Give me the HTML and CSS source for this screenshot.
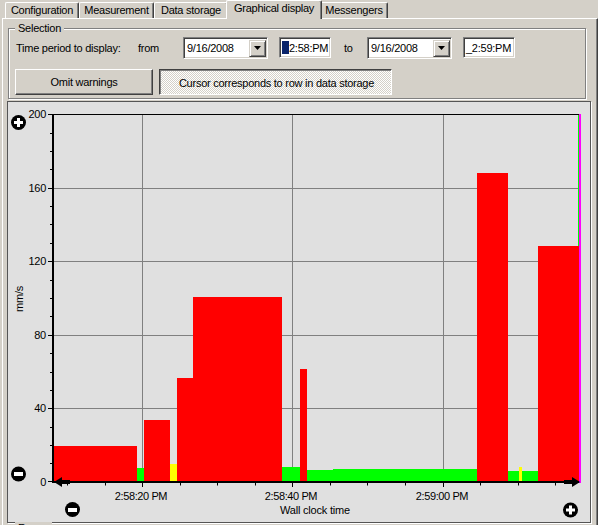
FILE: index.html
```html
<!DOCTYPE html>
<html lang="en">
<head>
    <meta charset="UTF-8">
    <title>Graphical display</title>
    <link rel="stylesheet" href="styles.css">
</head>
<body>
    <div class="app">
        <div class="tabs">
            <div class="tab tab-config">Configuration</div>
            <div class="tab tab-measure">Measurement</div>
            <div class="tab tab-storage">Data storage</div>
            <div class="tab tab-graph active">Graphical display</div>
            <div class="tab tab-msg">Messengers</div>
        </div>
        <div class="page">
            <div class="group selection">
                <div class="group-title">Selection</div>
                <div class="time-row">
                    <span class="lbl lbl-period">Time period to display:</span>
                    <span class="lbl lbl-from">from</span>
                    <div class="combo">
                        <span class="combo-text">9/16/2008</span>
                        <span class="combo-btn"><svg width="7" height="4" viewBox="0 0 7 4"><polygon points="0,0 7,0 3.5,4" fill="#000"/></svg></span>
                    </div>
                    <div class="edit edit-from"><span class="sel"></span>2:58:PM</div>
                    <span class="lbl lbl-to">to</span>
                    <div class="combo">
                        <span class="combo-text">9/16/2008</span>
                        <span class="combo-btn"><svg width="7" height="4" viewBox="0 0 7 4"><polygon points="0,0 7,0 3.5,4" fill="#000"/></svg></span>
                    </div>
                    <div class="edit edit-to">_2:59:PM</div>
                </div>
                <div class="btn-row">
                    <button class="btn btn-omit">Omit warnings</button>
                    <button class="btn btn-cursor pressed">Cursor corresponds to row in data storage</button>
                </div>
            </div>

            <div class="chart-panel">
                <svg class="chart" width="582" height="420" viewBox="8 102 582 420">
                    <!-- grid -->
                    <g stroke="#808080" stroke-width="1">
                        <path d="M142.5 115V481M292.5 115V481M443.5 115V481"/>
                        <path d="M54 188.5H578M54 261.5H578M54 335.5H578M54 408.5H578"/>
                    </g>

                    <!-- bars -->
                    <g>
                        <rect x="54" y="446" width="83" height="35" fill="#ff0000"/>
                        <rect x="137" y="468" width="7" height="13" fill="#00ff00"/>
                        <rect x="144" y="420" width="26" height="61" fill="#ff0000"/>
                        <rect x="170" y="464" width="7" height="17" fill="#ffff00"/>
                        <rect x="177" y="378" width="16" height="103" fill="#ff0000"/>
                        <rect x="193" y="297" width="89" height="184" fill="#ff0000"/>
                        <rect x="282" y="467" width="18" height="14" fill="#00ff00"/>
                        <rect x="300" y="369" width="7" height="112" fill="#ff0000"/>
                        <rect x="307" y="470" width="26" height="11" fill="#00ff00"/>
                        <rect x="333" y="469" width="144" height="12" fill="#00ff00"/>
                        <rect x="477" y="173" width="31" height="308" fill="#ff0000"/>
                        <rect x="508" y="471" width="30" height="10" fill="#00ff00"/>
                        <rect x="519" y="467" width="3" height="14" fill="#ffff00"/>
                        <rect x="538" y="246" width="41" height="235" fill="#ff0000"/>
                        <rect x="578" y="114" width="1" height="132" fill="#00ff00"/>
                        <rect x="579" y="114" width="2" height="369" fill="#ff00ff"/>
                    </g>

                    <!-- axes -->
                    <rect x="52" y="114" width="527" height="1" fill="#000"/>
                    <rect x="52" y="114" width="2" height="369" fill="#000"/>
                    <rect x="52" y="481" width="527" height="2" fill="#000"/>

                    <g stroke="#000" stroke-width="1">
                        <path d="M48 114.5H52M48 188.5H52M48 261.5H52M48 335.5H52M48 408.5H52M48 481.5H52"/>
                        <path d="M50 463.5H52M50 445.5H52M50 427.5H52M50 390.5H52M50 372.5H52M50 353.5H52M50 316.5H52M50 298.5H52M50 280.5H52M50 243.5H52M50 224.5H52M50 206.5H52M50 169.5H52M50 151.5H52M50 133.5H52"/>
                        <path d="M67.5 483V485.5M105.5 483V485.5M180.5 483V485.5M217.5 483V485.5M255.5 483V485.5M330.5 483V485.5M367.5 483V485.5M405.5 483V485.5M480.5 483V485.5M518.5 483V485.5M555.5 483V485.5"/>
                        <path d="M142.5 483V487M292.5 483V487M443.5 483V487"/>
                    </g>

                    <!-- arrows -->
                    <polygon points="54,482 62,477 62,487" fill="#000"/>
                    <rect x="61" y="480" width="9" height="4" fill="#000"/>
                    <polygon points="580,482 572,477 572,487" fill="#000"/>
                    <rect x="564" y="480" width="9" height="4" fill="#000"/>

                    <!-- labels -->
                    <g class="axis-text" text-anchor="end">
                        <text x="46" y="118">200</text>
                        <text x="46" y="192">160</text>
                        <text x="46" y="265">120</text>
                        <text x="46" y="339">80</text>
                        <text x="46" y="412">40</text>
                        <text x="46" y="486">0</text>
                    </g>
                    <g class="axis-text time-text" text-anchor="middle">
                        <text x="141" y="500">2:58:20 PM</text>
                        <text x="291" y="500">2:58:40 PM</text>
                        <text x="442" y="500">2:59:00 PM</text>
                    </g>
                    <text class="axis-text title-text" x="315" y="514" text-anchor="middle">Wall clock time</text>
                    <text class="axis-text" x="0" y="0" text-anchor="middle" transform="translate(23 299) rotate(-90)">mm/s</text>

                    <!-- zoom buttons -->
                    <circle cx="18.5" cy="122.5" r="7.5" fill="#000"/>
                    <rect x="14" y="121" width="9" height="3" fill="#fff"/>
                    <rect x="17" y="118" width="3" height="9" fill="#fff"/>

                    <circle cx="18.5" cy="474" r="7.5" fill="#000"/>
                    <rect x="14" y="472" width="9" height="4" fill="#fff"/>

                    <circle cx="72.5" cy="509.5" r="7.5" fill="#000"/>
                    <rect x="68" y="508" width="9" height="4" fill="#fff"/>

                    <circle cx="570.5" cy="510" r="7.5" fill="#000"/>
                    <rect x="566" y="508.5" width="9" height="3" fill="#fff"/>
                    <rect x="569" y="505.5" width="3" height="9" fill="#fff"/>
                </svg>
            </div>

            <div class="group range">
                <div class="group-title">Range</div>
            </div>
        </div>
    </div>
</body>
</html>
```

FILE: styles.css
```css
body {
    margin: 0;
    background: #d4d0c8;
    font-family: "Liberation Sans", Arial, sans-serif;
    font-size: 11px;
    letter-spacing: -0.25px;
    color: #000;
    height: 525px;
    overflow: hidden;
}
.app {
    width: 598px;
}
.tabs {
    display: flex;
    align-items: flex-end;
    height: 18px;
    padding-left: 5px;
}
.tab {
    box-sizing: border-box;
    height: 16px;
    line-height: 14px;
    text-align: center;
    border-top: 1px solid #fff;
    border-left: 1px solid #fff;
    border-right: 1px solid #404040;
    box-shadow: inset -1px 0 0 #808080;
    border-radius: 2px 2px 0 0;
    white-space: nowrap;
}
.tab-config { width: 74px; }
.tab-measure { width: 75px; }
.tab-storage { width: 74px; }
.tab-graph { width: 92px; }
.tab-msg { width: 68px; }
.tab.active {
    position: relative;
    z-index: 1;
    width: 96px;
    height: 19px;
    margin: 0 -2px -1px;
    line-height: 15px;
    padding-bottom: 3px;
    background: #d4d0c8;
}
.page {
    box-sizing: border-box;
    margin-left: 2px;
    width: 596px;
    height: 520px;
    border-top: 1px solid #fff;
    border-left: 1px solid #fff;
    border-right: 1px solid #404040;
    box-shadow: inset -1px 0 0 #808080;
}

/* group boxes */
.group {
    box-sizing: border-box;
    margin-left: 5px;
    width: 578px;
    border: 1px solid #808080;
    box-shadow: inset 1px 1px 0 #fff, 1px 1px 0 #fff;
}
.selection {
    margin-top: 9px;
    padding: 0 0 3px 0;
}
.group-title {
    width: fit-content;
    height: 13px;
    line-height: 13px;
    margin: -7px 0 0 6px;
    padding: 0 3px;
    background: #d4d0c8;
}
.time-row {
    display: flex;
    align-items: flex-start;
    height: 22px;
    margin-top: 2px;
    padding-left: 7px;
}
.lbl {
    line-height: 22px;
    white-space: nowrap;
}
.lbl-period { width: 122px; }
.lbl-from { width: 45px; }
.lbl-to {
    width: 23px;
    margin-left: 13px;
}
.combo,
.edit {
    box-sizing: border-box;
    display: flex;
    align-items: center;
    background: #fff;
    border: 1px solid;
    border-color: #808080 #fff #fff #808080;
    box-shadow: inset 1px 1px 0 #404040, inset -1px -1px 0 #d4d0c8;
}
.combo {
    width: 85px;
    height: 22px;
    padding: 0 1px 0 3px;
}
.combo-btn {
    box-sizing: border-box;
    display: flex;
    align-items: center;
    justify-content: center;
    margin-left: auto;
    width: 17px;
    height: 17px;
    background: #d4d0c8;
    border: 1px solid;
    border-color: #d4d0c8 #404040 #404040 #d4d0c8;
    box-shadow: inset 1px 1px 0 #fff, inset -1px -1px 0 #808080;
}
.edit {
    width: 52px;
    height: 21px;
    padding-left: 2px;
    margin-left: 11px;
}
.sel {
    display: inline-block;
    width: 7px;
    height: 13px;
    background: #0a246a;
}
.btn-row {
    display: flex;
    gap: 6px;
    margin-top: 10px;
    padding-left: 6px;
}
.btn {
    box-sizing: border-box;
    height: 26px;
    padding: 0;
    font: inherit;
    letter-spacing: inherit;
    color: #000;
    background: #d4d0c8;
    border: 1px solid;
    border-color: #fff #404040 #404040 #fff;
    box-shadow: inset -1px -1px 0 #808080;
}
.btn-omit { width: 138px; }
.btn-cursor { width: 233px; }
.btn.pressed {
    padding: 2px 0 0 2px;
    border-color: #404040 #fff #fff #404040;
    box-shadow: inset 1px 1px 0 #808080;
    background: repeating-conic-gradient(#fff 0 25%, #d4d0c8 0 50%) 0 0 / 2px 2px;
}

/* chart */
.chart-panel {
    box-sizing: border-box;
    margin: 2px 0 0 4px;
    width: 584px;
    height: 422px;
    border: 1px solid #555;
    box-shadow: 1px 1px 0 #fff;
    background: #e0e0e0;
}
.chart {
    display: block;
}
.axis-text {
    font-family: "Liberation Sans", Arial, sans-serif;
    font-size: 11px;
    fill: #000;
}
.time-text {
    letter-spacing: -0.4px;
}
.title-text {
    letter-spacing: -0.2px;
}
.range {
    margin-top: 5px;
    height: 40px;
}
```
